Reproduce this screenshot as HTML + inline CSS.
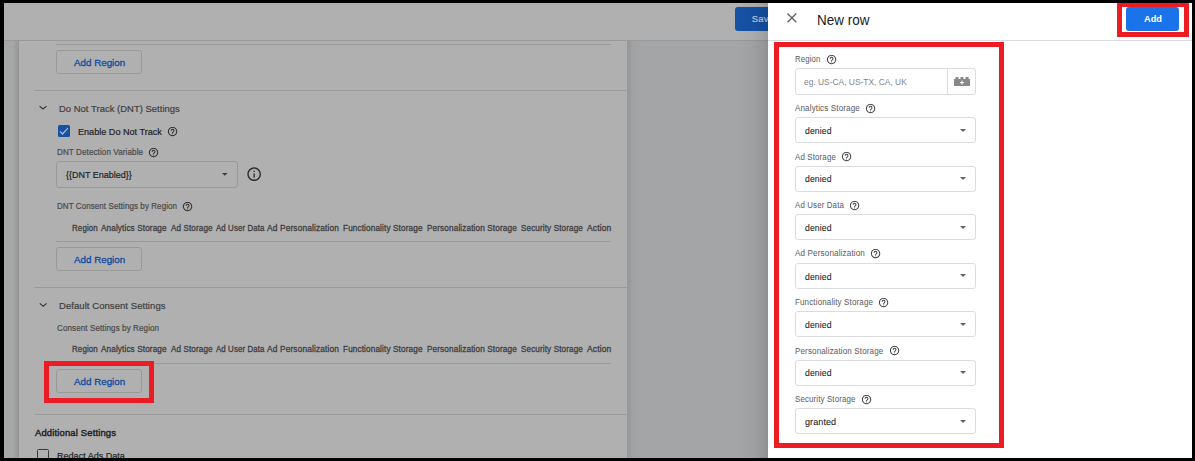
<!DOCTYPE html>
<html><head><meta charset="utf-8">
<style>
html,body{margin:0;padding:0;}
body{width:1195px;height:461px;position:relative;overflow:hidden;background:#000;font-family:"Liberation Sans",sans-serif;}
.a{position:absolute;box-sizing:border-box;}
.t{position:absolute;white-space:nowrap;line-height:1;}
svg.a{overflow:visible}
</style></head><body>
<div class="a" style="left:4px;top:3px;width:764px;height:37px;background:#b0b0b0"></div>
<div class="a" style="left:4px;top:40px;width:764px;height:1px;background:#97999a"></div>
<div class="a" style="left:4px;top:41px;width:15px;height:417px;background:linear-gradient(90deg,#a7a9a9 0px,#a5a7a7 9px,#9a9c9c 13px,#949696 15px)"></div>
<div class="a" style="left:19px;top:41px;width:608px;height:417px;background:#b0b0b0"></div>
<div class="a" style="left:627px;top:41px;width:141px;height:417px;background:linear-gradient(90deg,#949697 0px,#a0a2a3 6px,#a4a5a7 14px)"></div>
<div class="a" style="left:735px;top:7px;width:60px;height:24px;background:#1551a5;border-radius:3px"></div>
<div class="t" style="left:751.8px;top:14px;font-size:9.4px;font-weight:normal;letter-spacing:0.2px;color:#c0c8d8;-webkit-text-stroke:0.2px currentColor">Save</div>
<div class="a" style="left:56px;top:44px;width:555px;height:1px;background:#9a9a9a"></div>
<div class="a" style="left:56px;top:50px;width:86px;height:24px;border:1px solid #999999;border-radius:3px"></div>
<div class="t" style="left:74px;top:58px;font-size:9.8px;font-weight:normal;letter-spacing:0px;transform:scaleX(0.9999);transform-origin:0 0;color:#104ca0;-webkit-text-stroke:0.3px currentColor">Add Region</div>
<div class="a" style="left:35px;top:90px;width:592px;height:1px;background:#9a9a9a"></div>
<svg class="a" style="left:0;top:0" width="1" height="1"><path d="M39.6 106.2L43.0 109L46.4 106.2" fill="none" stroke="#3a3a3a" stroke-width="1.2"/></svg>
<div class="t" style="left:59.2px;top:104px;font-size:9.5px;font-weight:normal;letter-spacing:0.05px;transform:scaleX(0.9885);transform-origin:0 0;color:#404040;-webkit-text-stroke:0.2px currentColor">Do Not Track (DNT) Settings</div>
<div class="a" style="left:58px;top:125px;width:12px;height:12px;background:#1551a5;border-radius:1.5px"></div>
<svg class="a" style="left:0;top:0" width="1" height="1"><path d="M60.1 131.4L62.5 134L67.9 128.2" fill="none" stroke="#bdbdbd" stroke-width="1.2"/></svg>
<div class="t" style="left:78px;top:127px;font-size:9.5px;font-weight:normal;letter-spacing:0px;transform:scaleX(0.9571);transform-origin:0 0;color:#1f1f1f;-webkit-text-stroke:0.2px currentColor">Enable Do Not Track</div>
<svg class="a" style="left:166.72px;top:126.22px" width="11.16" height="11.16" viewBox="0 0 24 24"><path d="M11 18h2v-2h-2v2zm1-16C6.48 2 2 6.48 2 12s4.48 10 10 10 10-4.48 10-10S17.52 2 12 2zm0 18c-4.41 0-8-3.59-8-8s3.59-8 8-8 8 3.59 8 8-3.59 8-8 8zm0-14c-2.21 0-4 1.79-4 4h2c0-1.1.9-2 2-2s2 .9 2 2c0 2-3 1.75-3 5h2c0-2.25 3-2.5 3-5 0-2.21-1.79-4-4-4z" fill="#2a2a2a" stroke="#2a2a2a" stroke-width="0.15"/></svg>
<div class="t" style="left:57px;top:148px;font-size:8.5px;font-weight:normal;letter-spacing:0.1px;transform:scaleX(0.9492);transform-origin:0 0;color:#4a4a4a;-webkit-text-stroke:0.2px currentColor">DNT Detection Variable</div>
<svg class="a" style="left:148.42px;top:146.92px" width="11.16" height="11.16" viewBox="0 0 24 24"><path d="M11 18h2v-2h-2v2zm1-16C6.48 2 2 6.48 2 12s4.48 10 10 10 10-4.48 10-10S17.52 2 12 2zm0 18c-4.41 0-8-3.59-8-8s3.59-8 8-8 8 3.59 8 8-3.59 8-8 8zm0-14c-2.21 0-4 1.79-4 4h2c0-1.1.9-2 2-2s2 .9 2 2c0 2-3 1.75-3 5h2c0-2.25 3-2.5 3-5 0-2.21-1.79-4-4-4z" fill="#2a2a2a" stroke="#2a2a2a" stroke-width="0.15"/></svg>
<div class="a" style="left:56px;top:161px;width:182px;height:26.5px;border:1px solid #999999;border-radius:3px"></div>
<div class="t" style="left:65.6px;top:170px;font-size:9.4px;font-weight:normal;letter-spacing:0px;transform:scaleX(0.9586);transform-origin:0 0;color:#1f1f1f;-webkit-text-stroke:0.2px currentColor">{{DNT Enabled}}</div>
<svg class="a" style="left:222.20px;top:172.60px" width="5.6" height="2.8" viewBox="0 0 5.6 2.8"><path d="M0 0H5.6L2.8 2.8Z" fill="#3a3a3a"/></svg>
<svg class="a" style="left:245.84px;top:165.84px" width="16.32" height="16.32" viewBox="0 0 24 24"><path d="M11 7h2v2h-2zm0 4h2v6h-2zm1-9C6.48 2 2 6.48 2 12s4.48 10 10 10 10-4.48 10-10S17.52 2 12 2zm0 18c-4.41 0-8-3.59-8-8s3.59-8 8-8 8 3.59 8 8-3.59 8-8 8z" fill="#2a2a2a"/></svg>
<div class="t" style="left:57px;top:202px;font-size:8.5px;font-weight:normal;letter-spacing:0.1px;transform:scaleX(0.9379);transform-origin:0 0;color:#4a4a4a;-webkit-text-stroke:0.2px currentColor">DNT Consent Settings by Region</div>
<svg class="a" style="left:182.12px;top:200.82px" width="11.16" height="11.16" viewBox="0 0 24 24"><path d="M11 18h2v-2h-2v2zm1-16C6.48 2 2 6.48 2 12s4.48 10 10 10 10-4.48 10-10S17.52 2 12 2zm0 18c-4.41 0-8-3.59-8-8s3.59-8 8-8 8 3.59 8 8-3.59 8-8 8zm0-14c-2.21 0-4 1.79-4 4h2c0-1.1.9-2 2-2s2 .9 2 2c0 2-3 1.75-3 5h2c0-2.25 3-2.5 3-5 0-2.21-1.79-4-4-4z" fill="#2a2a2a" stroke="#2a2a2a" stroke-width="0.15"/></svg>
<div class="t" style="left:72.4px;top:224px;font-size:8.3px;font-weight:normal;letter-spacing:0.12px;transform:scaleX(0.9593);transform-origin:0 0;color:#3e4043;-webkit-text-stroke:0.3px currentColor">Region</div>
<div class="t" style="left:101.4px;top:224px;font-size:8.3px;font-weight:normal;letter-spacing:0.12px;transform:scaleX(0.9866);transform-origin:0 0;color:#3e4043;-webkit-text-stroke:0.3px currentColor">Analytics Storage</div>
<div class="t" style="left:170.8px;top:224px;font-size:8.3px;font-weight:normal;letter-spacing:0.12px;transform:scaleX(0.9742);transform-origin:0 0;color:#3e4043;-webkit-text-stroke:0.3px currentColor">Ad Storage</div>
<div class="t" style="left:215.7px;top:224px;font-size:8.3px;font-weight:normal;letter-spacing:0.12px;transform:scaleX(0.9447);transform-origin:0 0;color:#3e4043;-webkit-text-stroke:0.3px currentColor">Ad User Data</div>
<div class="t" style="left:267px;top:224px;font-size:8.3px;font-weight:normal;letter-spacing:0.12px;transform:scaleX(1.0109);transform-origin:0 0;color:#3e4043;-webkit-text-stroke:0.3px currentColor">Ad Personalization</div>
<div class="t" style="left:342.5px;top:224px;font-size:8.3px;font-weight:normal;letter-spacing:0.12px;transform:scaleX(0.9894);transform-origin:0 0;color:#3e4043;-webkit-text-stroke:0.3px currentColor">Functionality Storage</div>
<div class="t" style="left:426.5px;top:224px;font-size:8.3px;font-weight:normal;letter-spacing:0.12px;transform:scaleX(0.9885);transform-origin:0 0;color:#3e4043;-webkit-text-stroke:0.3px currentColor">Personalization Storage</div>
<div class="t" style="left:521.2px;top:224px;font-size:8.3px;font-weight:normal;letter-spacing:0.12px;transform:scaleX(0.9787);transform-origin:0 0;color:#3e4043;-webkit-text-stroke:0.3px currentColor">Security Storage</div>
<div class="t" style="left:586.8px;top:224px;font-size:8.3px;font-weight:normal;letter-spacing:0.12px;transform:scaleX(1.0228);transform-origin:0 0;color:#3e4043;-webkit-text-stroke:0.3px currentColor">Action</div>
<div class="a" style="left:56px;top:241px;width:555px;height:1px;background:#9a9a9a"></div>
<div class="a" style="left:56px;top:247px;width:86px;height:24px;border:1px solid #999999;border-radius:3px"></div>
<div class="t" style="left:74px;top:255px;font-size:9.8px;font-weight:normal;letter-spacing:0px;transform:scaleX(0.9999);transform-origin:0 0;color:#104ca0;-webkit-text-stroke:0.3px currentColor">Add Region</div>
<div class="a" style="left:35px;top:287px;width:592px;height:1px;background:#9a9a9a"></div>
<svg class="a" style="left:0;top:0" width="1" height="1"><path d="M39.8 303.4L43.2 306.2L46.6 303.4" fill="none" stroke="#3a3a3a" stroke-width="1.2"/></svg>
<div class="t" style="left:59.4px;top:301px;font-size:9.5px;font-weight:normal;letter-spacing:0.05px;transform:scaleX(1.0024);transform-origin:0 0;color:#404040;-webkit-text-stroke:0.2px currentColor">Default Consent Settings</div>
<div class="t" style="left:56.9px;top:324px;font-size:8.5px;font-weight:normal;letter-spacing:0.1px;transform:scaleX(0.9464);transform-origin:0 0;color:#4a4a4a;-webkit-text-stroke:0.2px currentColor">Consent Settings by Region</div>
<div class="t" style="left:72.4px;top:345px;font-size:8.3px;font-weight:normal;letter-spacing:0.12px;transform:scaleX(0.9593);transform-origin:0 0;color:#3e4043;-webkit-text-stroke:0.3px currentColor">Region</div>
<div class="t" style="left:101.4px;top:345px;font-size:8.3px;font-weight:normal;letter-spacing:0.12px;transform:scaleX(0.9866);transform-origin:0 0;color:#3e4043;-webkit-text-stroke:0.3px currentColor">Analytics Storage</div>
<div class="t" style="left:170.8px;top:345px;font-size:8.3px;font-weight:normal;letter-spacing:0.12px;transform:scaleX(0.9742);transform-origin:0 0;color:#3e4043;-webkit-text-stroke:0.3px currentColor">Ad Storage</div>
<div class="t" style="left:215.7px;top:345px;font-size:8.3px;font-weight:normal;letter-spacing:0.12px;transform:scaleX(0.9447);transform-origin:0 0;color:#3e4043;-webkit-text-stroke:0.3px currentColor">Ad User Data</div>
<div class="t" style="left:267px;top:345px;font-size:8.3px;font-weight:normal;letter-spacing:0.12px;transform:scaleX(1.0109);transform-origin:0 0;color:#3e4043;-webkit-text-stroke:0.3px currentColor">Ad Personalization</div>
<div class="t" style="left:342.5px;top:345px;font-size:8.3px;font-weight:normal;letter-spacing:0.12px;transform:scaleX(0.9894);transform-origin:0 0;color:#3e4043;-webkit-text-stroke:0.3px currentColor">Functionality Storage</div>
<div class="t" style="left:426.5px;top:345px;font-size:8.3px;font-weight:normal;letter-spacing:0.12px;transform:scaleX(0.9885);transform-origin:0 0;color:#3e4043;-webkit-text-stroke:0.3px currentColor">Personalization Storage</div>
<div class="t" style="left:521.2px;top:345px;font-size:8.3px;font-weight:normal;letter-spacing:0.12px;transform:scaleX(0.9787);transform-origin:0 0;color:#3e4043;-webkit-text-stroke:0.3px currentColor">Security Storage</div>
<div class="t" style="left:586.8px;top:345px;font-size:8.3px;font-weight:normal;letter-spacing:0.12px;transform:scaleX(1.0228);transform-origin:0 0;color:#3e4043;-webkit-text-stroke:0.3px currentColor">Action</div>
<div class="a" style="left:56px;top:363px;width:555px;height:1px;background:#9a9a9a"></div>
<div class="a" style="left:56px;top:369px;width:86px;height:24px;border:1px solid #999999;border-radius:3px"></div>
<div class="t" style="left:74px;top:377px;font-size:9.8px;font-weight:normal;letter-spacing:0px;transform:scaleX(0.9999);transform-origin:0 0;color:#104ca0;-webkit-text-stroke:0.3px currentColor">Add Region</div>
<div class="a" style="left:35px;top:414px;width:592px;height:1px;background:#9a9a9a"></div>
<div class="t" style="left:35.4px;top:429px;font-size:9.2px;font-weight:normal;letter-spacing:0.15px;transform:scaleX(1.0279);transform-origin:0 0;color:#1f1f1f;-webkit-text-stroke:0.4px currentColor">Additional Settings</div>
<div class="a" style="left:37px;top:449.3px;width:12px;height:12px;border:1.3px solid #3a3a3a;border-radius:1.5px"></div>
<div class="t" style="left:56.8px;top:451px;font-size:9.5px;font-weight:normal;letter-spacing:0px;transform:scaleX(0.9524);transform-origin:0 0;color:#1f1f1f;-webkit-text-stroke:0.2px currentColor">Redact Ads Data</div>
<div class="a" style="left:44px;top:361px;width:110px;height:42px;border:5px solid #ed1c24"></div>
<div class="a" style="left:738px;top:3px;width:30px;height:455px;background:linear-gradient(90deg,rgba(0,0,0,0) 0px,rgba(0,0,0,0.03) 14px,rgba(0,0,0,0.08) 24px,rgba(0,0,0,0.13) 30px)"></div>
<div class="a" style="left:768px;top:3px;width:424px;height:455px;background:#fff"></div>
<div class="a" style="left:768px;top:40px;width:424px;height:1px;background:#dadce0"></div>
<svg class="a" style="left:0;top:0" width="1" height="1"><path d="M787.5 13.4L796.3 22.2M796.3 13.4L787.5 22.2" stroke="#5f6368" stroke-width="1.35" fill="none"/></svg>
<div class="t" style="left:816.6px;top:13px;font-size:14px;font-weight:normal;letter-spacing:0px;transform:scaleX(0.9620);transform-origin:0 0;color:#202124;-webkit-text-stroke:0px currentColor">New row</div>
<div class="a" style="left:1126px;top:7px;width:53px;height:24px;background:#1a73e8;border-radius:3px"></div>
<div class="t" style="left:1144px;top:14px;font-size:9.5px;font-weight:bold;letter-spacing:0px;transform:scaleX(0.9746);transform-origin:0 0;color:#fff;-webkit-text-stroke:0px currentColor">Add</div>
<div class="a" style="left:1117px;top:2px;width:72px;height:35px;border:5px solid #ed1c24"></div>
<div class="t" style="left:795.1px;top:55px;font-size:8.5px;font-weight:normal;letter-spacing:0.15px;transform:scaleX(0.9136);transform-origin:0 0;color:#5f6368;-webkit-text-stroke:0.05px currentColor">Region</div>
<svg class="a" style="left:825.72px;top:53.92px" width="11.16" height="11.16" viewBox="0 0 24 24"><path d="M11 18h2v-2h-2v2zm1-16C6.48 2 2 6.48 2 12s4.48 10 10 10 10-4.48 10-10S17.52 2 12 2zm0 18c-4.41 0-8-3.59-8-8s3.59-8 8-8 8 3.59 8 8-3.59 8-8 8zm0-14c-2.21 0-4 1.79-4 4h2c0-1.1.9-2 2-2s2 .9 2 2c0 2-3 1.75-3 5h2c0-2.25 3-2.5 3-5 0-2.21-1.79-4-4-4z" fill="#3c4043" stroke="#3c4043" stroke-width="0.15"/></svg>
<div class="a" style="left:795px;top:68px;width:181px;height:26.5px;border:1px solid #dadce0;border-radius:3px"></div>
<div class="a" style="left:947.2px;top:68px;width:1px;height:26.5px;background:#dadce0"></div>
<div class="t" style="left:804.2px;top:78px;font-size:9px;font-weight:normal;letter-spacing:0px;transform:scaleX(0.9343);transform-origin:0 0;color:#80868b;-webkit-text-stroke:0px currentColor">eg. US-CA, US-TX, CA, UK</div>
<svg class="a" style="left:954px;top:77px" width="16" height="9" viewBox="0 0 16 9"><path d="M0 2H1.5V0H4.5V2H6.5V0H9.5V2H11.5V0H14.5V2H16V9H0Z" fill="#888"/><path d="M8 3.6V7.6M6 5.6H10" stroke="#fff" stroke-width="1"/></svg>
<div class="t" style="left:795.2px;top:104px;font-size:8.5px;font-weight:normal;letter-spacing:0.15px;transform:scaleX(0.9445);transform-origin:0 0;color:#5f6368;-webkit-text-stroke:0.05px currentColor">Analytics Storage</div>
<svg class="a" style="left:865.22px;top:102.72px" width="11.16" height="11.16" viewBox="0 0 24 24"><path d="M11 18h2v-2h-2v2zm1-16C6.48 2 2 6.48 2 12s4.48 10 10 10 10-4.48 10-10S17.52 2 12 2zm0 18c-4.41 0-8-3.59-8-8s3.59-8 8-8 8 3.59 8 8-3.59 8-8 8zm0-14c-2.21 0-4 1.79-4 4h2c0-1.1.9-2 2-2s2 .9 2 2c0 2-3 1.75-3 5h2c0-2.25 3-2.5 3-5 0-2.21-1.79-4-4-4z" fill="#3c4043" stroke="#3c4043" stroke-width="0.15"/></svg>
<div class="a" style="left:795px;top:117.2px;width:181px;height:26px;border:1px solid #dadce0;border-radius:3px"></div>
<div class="t" style="left:804.5px;top:127px;font-size:9.2px;font-weight:normal;letter-spacing:0.1px;transform:scaleX(0.9430);transform-origin:0 0;color:#202124;-webkit-text-stroke:0.08px currentColor">denied</div>
<svg class="a" style="left:960.40px;top:128.70px" width="6" height="3.0" viewBox="0 0 6 3.0"><path d="M0 0H6L3.0 3.0Z" fill="#5f6368"/></svg>
<div class="t" style="left:795.2px;top:153px;font-size:8.5px;font-weight:normal;letter-spacing:0.15px;transform:scaleX(0.9309);transform-origin:0 0;color:#5f6368;-webkit-text-stroke:0.05px currentColor">Ad Storage</div>
<svg class="a" style="left:841.32px;top:151.22px" width="11.16" height="11.16" viewBox="0 0 24 24"><path d="M11 18h2v-2h-2v2zm1-16C6.48 2 2 6.48 2 12s4.48 10 10 10 10-4.48 10-10S17.52 2 12 2zm0 18c-4.41 0-8-3.59-8-8s3.59-8 8-8 8 3.59 8 8-3.59 8-8 8zm0-14c-2.21 0-4 1.79-4 4h2c0-1.1.9-2 2-2s2 .9 2 2c0 2-3 1.75-3 5h2c0-2.25 3-2.5 3-5 0-2.21-1.79-4-4-4z" fill="#3c4043" stroke="#3c4043" stroke-width="0.15"/></svg>
<div class="a" style="left:795px;top:165.7px;width:181px;height:26px;border:1px solid #dadce0;border-radius:3px"></div>
<div class="t" style="left:804.5px;top:175px;font-size:9.2px;font-weight:normal;letter-spacing:0.1px;transform:scaleX(0.9430);transform-origin:0 0;color:#202124;-webkit-text-stroke:0.08px currentColor">denied</div>
<svg class="a" style="left:960.40px;top:177.20px" width="6" height="3.0" viewBox="0 0 6 3.0"><path d="M0 0H6L3.0 3.0Z" fill="#5f6368"/></svg>
<div class="t" style="left:795.2px;top:201px;font-size:8.5px;font-weight:normal;letter-spacing:0.15px;transform:scaleX(0.9273);transform-origin:0 0;color:#5f6368;-webkit-text-stroke:0.05px currentColor">Ad User Data</div>
<svg class="a" style="left:849.32px;top:199.72px" width="11.16" height="11.16" viewBox="0 0 24 24"><path d="M11 18h2v-2h-2v2zm1-16C6.48 2 2 6.48 2 12s4.48 10 10 10 10-4.48 10-10S17.52 2 12 2zm0 18c-4.41 0-8-3.59-8-8s3.59-8 8-8 8 3.59 8 8-3.59 8-8 8zm0-14c-2.21 0-4 1.79-4 4h2c0-1.1.9-2 2-2s2 .9 2 2c0 2-3 1.75-3 5h2c0-2.25 3-2.5 3-5 0-2.21-1.79-4-4-4z" fill="#3c4043" stroke="#3c4043" stroke-width="0.15"/></svg>
<div class="a" style="left:795px;top:214.2px;width:181px;height:26px;border:1px solid #dadce0;border-radius:3px"></div>
<div class="t" style="left:804.5px;top:224px;font-size:9.2px;font-weight:normal;letter-spacing:0.1px;transform:scaleX(0.9430);transform-origin:0 0;color:#202124;-webkit-text-stroke:0.08px currentColor">denied</div>
<svg class="a" style="left:960.40px;top:225.70px" width="6" height="3.0" viewBox="0 0 6 3.0"><path d="M0 0H6L3.0 3.0Z" fill="#5f6368"/></svg>
<div class="t" style="left:795.2px;top:249px;font-size:8.5px;font-weight:normal;letter-spacing:0.15px;transform:scaleX(0.9513);transform-origin:0 0;color:#5f6368;-webkit-text-stroke:0.05px currentColor">Ad Personalization</div>
<svg class="a" style="left:870.32px;top:248.22px" width="11.16" height="11.16" viewBox="0 0 24 24"><path d="M11 18h2v-2h-2v2zm1-16C6.48 2 2 6.48 2 12s4.48 10 10 10 10-4.48 10-10S17.52 2 12 2zm0 18c-4.41 0-8-3.59-8-8s3.59-8 8-8 8 3.59 8 8-3.59 8-8 8zm0-14c-2.21 0-4 1.79-4 4h2c0-1.1.9-2 2-2s2 .9 2 2c0 2-3 1.75-3 5h2c0-2.25 3-2.5 3-5 0-2.21-1.79-4-4-4z" fill="#3c4043" stroke="#3c4043" stroke-width="0.15"/></svg>
<div class="a" style="left:795px;top:262.7px;width:181px;height:26px;border:1px solid #dadce0;border-radius:3px"></div>
<div class="t" style="left:804.5px;top:273px;font-size:9.2px;font-weight:normal;letter-spacing:0.1px;transform:scaleX(0.9430);transform-origin:0 0;color:#202124;-webkit-text-stroke:0.08px currentColor">denied</div>
<svg class="a" style="left:960.40px;top:274.20px" width="6" height="3.0" viewBox="0 0 6 3.0"><path d="M0 0H6L3.0 3.0Z" fill="#5f6368"/></svg>
<div class="t" style="left:795.2px;top:298px;font-size:8.5px;font-weight:normal;letter-spacing:0.15px;transform:scaleX(0.9409);transform-origin:0 0;color:#5f6368;-webkit-text-stroke:0.05px currentColor">Functionality Storage</div>
<svg class="a" style="left:878.42px;top:296.72px" width="11.16" height="11.16" viewBox="0 0 24 24"><path d="M11 18h2v-2h-2v2zm1-16C6.48 2 2 6.48 2 12s4.48 10 10 10 10-4.48 10-10S17.52 2 12 2zm0 18c-4.41 0-8-3.59-8-8s3.59-8 8-8 8 3.59 8 8-3.59 8-8 8zm0-14c-2.21 0-4 1.79-4 4h2c0-1.1.9-2 2-2s2 .9 2 2c0 2-3 1.75-3 5h2c0-2.25 3-2.5 3-5 0-2.21-1.79-4-4-4z" fill="#3c4043" stroke="#3c4043" stroke-width="0.15"/></svg>
<div class="a" style="left:795px;top:311.2px;width:181px;height:26px;border:1px solid #dadce0;border-radius:3px"></div>
<div class="t" style="left:804.5px;top:321px;font-size:9.2px;font-weight:normal;letter-spacing:0.1px;transform:scaleX(0.9430);transform-origin:0 0;color:#202124;-webkit-text-stroke:0.08px currentColor">denied</div>
<svg class="a" style="left:960.40px;top:322.70px" width="6" height="3.0" viewBox="0 0 6 3.0"><path d="M0 0H6L3.0 3.0Z" fill="#5f6368"/></svg>
<div class="t" style="left:795.2px;top:347px;font-size:8.5px;font-weight:normal;letter-spacing:0.15px;transform:scaleX(0.9433);transform-origin:0 0;color:#5f6368;-webkit-text-stroke:0.05px currentColor">Personalization Storage</div>
<svg class="a" style="left:888.72px;top:345.22px" width="11.16" height="11.16" viewBox="0 0 24 24"><path d="M11 18h2v-2h-2v2zm1-16C6.48 2 2 6.48 2 12s4.48 10 10 10 10-4.48 10-10S17.52 2 12 2zm0 18c-4.41 0-8-3.59-8-8s3.59-8 8-8 8 3.59 8 8-3.59 8-8 8zm0-14c-2.21 0-4 1.79-4 4h2c0-1.1.9-2 2-2s2 .9 2 2c0 2-3 1.75-3 5h2c0-2.25 3-2.5 3-5 0-2.21-1.79-4-4-4z" fill="#3c4043" stroke="#3c4043" stroke-width="0.15"/></svg>
<div class="a" style="left:795px;top:359.7px;width:181px;height:26px;border:1px solid #dadce0;border-radius:3px"></div>
<div class="t" style="left:804.5px;top:369px;font-size:9.2px;font-weight:normal;letter-spacing:0.1px;transform:scaleX(0.9430);transform-origin:0 0;color:#202124;-webkit-text-stroke:0.08px currentColor">denied</div>
<svg class="a" style="left:960.40px;top:371.20px" width="6" height="3.0" viewBox="0 0 6 3.0"><path d="M0 0H6L3.0 3.0Z" fill="#5f6368"/></svg>
<div class="t" style="left:795.2px;top:395px;font-size:8.5px;font-weight:normal;letter-spacing:0.15px;transform:scaleX(0.9270);transform-origin:0 0;color:#5f6368;-webkit-text-stroke:0.05px currentColor">Security Storage</div>
<svg class="a" style="left:860.82px;top:393.72px" width="11.16" height="11.16" viewBox="0 0 24 24"><path d="M11 18h2v-2h-2v2zm1-16C6.48 2 2 6.48 2 12s4.48 10 10 10 10-4.48 10-10S17.52 2 12 2zm0 18c-4.41 0-8-3.59-8-8s3.59-8 8-8 8 3.59 8 8-3.59 8-8 8zm0-14c-2.21 0-4 1.79-4 4h2c0-1.1.9-2 2-2s2 .9 2 2c0 2-3 1.75-3 5h2c0-2.25 3-2.5 3-5 0-2.21-1.79-4-4-4z" fill="#3c4043" stroke="#3c4043" stroke-width="0.15"/></svg>
<div class="a" style="left:795px;top:408.2px;width:181px;height:26px;border:1px solid #dadce0;border-radius:3px"></div>
<div class="t" style="left:804.5px;top:418px;font-size:9.2px;font-weight:normal;letter-spacing:0.1px;transform:scaleX(0.9788);transform-origin:0 0;color:#202124;-webkit-text-stroke:0.08px currentColor">granted</div>
<svg class="a" style="left:960.40px;top:419.70px" width="6" height="3.0" viewBox="0 0 6 3.0"><path d="M0 0H6L3.0 3.0Z" fill="#5f6368"/></svg>
<div class="a" style="left:774px;top:42px;width:230px;height:406px;border:5px solid #ed1c24"></div>
<div class="a" style="left:0px;top:0px;width:1195px;height:3px;background:#000"></div>
<div class="a" style="left:0px;top:0px;width:4px;height:461px;background:#000"></div>
<div class="a" style="left:1192px;top:0px;width:3px;height:461px;background:#000"></div>
<div class="a" style="left:0px;top:458px;width:1195px;height:3px;background:#000"></div>
</body></html>
